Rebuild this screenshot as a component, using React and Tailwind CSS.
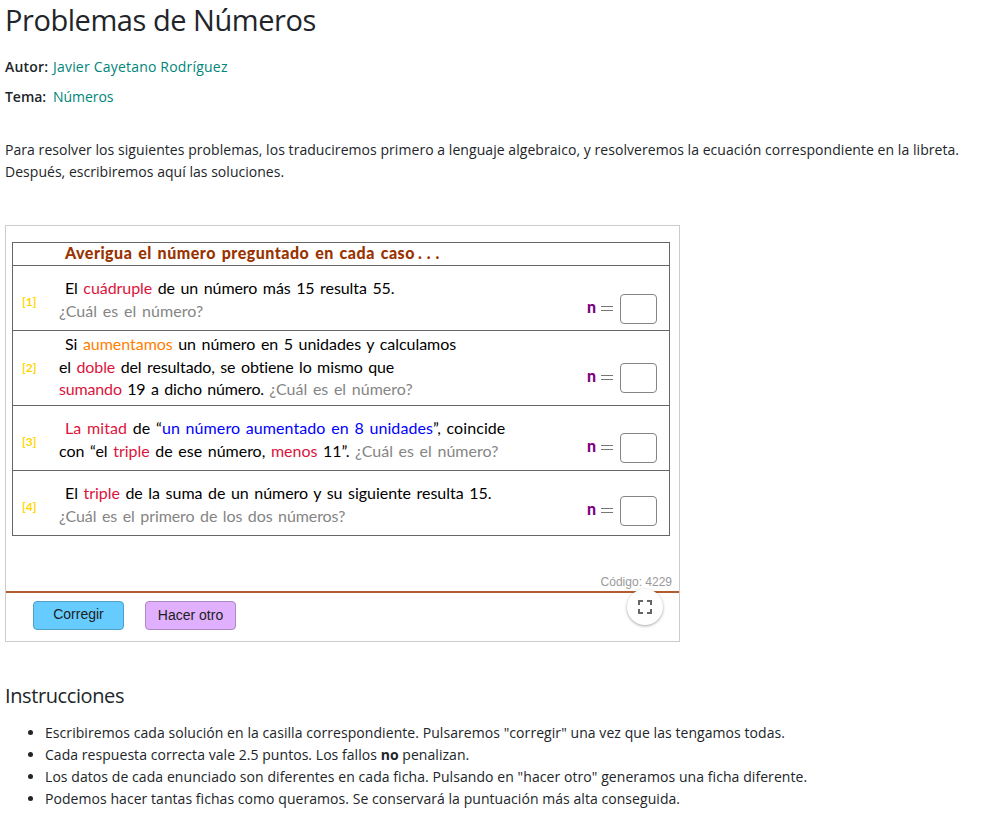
import React from "react";

const red = "text-[#dc143c]";
const gray = "text-[#858585]";

function Line({ indent, track, children }) {
  return (
    <div className={`h-[22.7px] whitespace-nowrap leading-[22.7px] [word-spacing:1.5px] ${indent ? "pl-[6px]" : ""} ${track}`}>
      {children}
    </div>
  );
}

function Row({ label, height, pad, labelPad, answerPad, children }) {
  return (
    <div className={`flex border-b border-[#666] ${height}`}>
      <div className={`w-[46px] shrink-0 pl-[9px] text-[12px] font-bold leading-4 text-[#ffd700] ${labelPad}`}>{label}</div>
      <div className={`w-[528px] shrink-0 ${pad}`}>{children}</div>
      <div className={`flex h-[29px] items-center ${answerPad}`}>
        <span className="w-[14px] pb-[3px] text-[16px] font-black leading-none text-[#800080]">n</span>
        <span className="flex w-[12px] flex-col gap-[3px]">
          <span className="h-px bg-[#777]" />
          <span className="h-px bg-[#777]" />
        </span>
        <input aria-label={`n ${label}`} className="ml-[7px] h-[30px] w-[37px] rounded-[4px] border border-[#858585] bg-white outline-none" />
      </div>
    </div>
  );
}

export default function App() {
  return (
    <main className="h-[815px] w-[993px] overflow-hidden bg-white pl-[5px] font-['Open_Sans',sans-serif] text-[14px] text-[#212529]">
      <h1 className="h-[42px] whitespace-nowrap text-[29px] leading-[40px] tracking-[-0.45px]">Problemas de Números</h1>
      <div className="mt-[14px] h-[22px] whitespace-nowrap leading-[22px] tracking-[0.2px]">
        <span className="inline-block w-[48px] font-semibold">Autor:</span>
        <a className="text-[#00857a]">Javier Cayetano Rodríguez</a>
      </div>
      <div className="mt-[8px] h-[22px] whitespace-nowrap leading-[22px] tracking-[-0.05px]">
        <span className="inline-block w-[48px] font-semibold">Tema:</span>
        <a className="text-[#00857a]">Números</a>
      </div>
      <div className="mt-[31px] whitespace-nowrap leading-[22px]">
        <p className="tracking-[0.055px]">Para resolver los siguientes problemas, los traduciremos primero a lenguaje algebraico, y resolveremos la ecuación correspondiente en la libreta.</p>
        <p className="tracking-[0.03px]">Después, escribiremos aquí las soluciones.</p>
      </div>

      <section className="mt-[42px] flex h-[417px] w-[675px] flex-col border border-[#ccc]">
        <div className="ml-[6px] mt-[16px] h-[294px] w-[658px] border-x border-t border-[#666] font-['Lato',sans-serif] text-[16px] text-black">
          <div className="h-[23px] whitespace-nowrap border-b border-[#666] pl-[52px] text-[16px] font-black leading-[20px] tracking-[0.5px] [word-spacing:1.5px] text-[#993300]">
            Averigua el número preguntado en cada caso<span className="pl-[3px] tracking-[5px]">...</span>
          </div>
          <Row label="[1]" height="h-[65px]" pad="pt-[11px]" labelPad="pt-[28px]" answerPad="mt-[28px]">
            <Line indent track="tracking-[-0.07px]">El <span className={red}>cuádruple</span> de un número más 15 resulta 55.</Line>
            <Line track="tracking-[0.07px]"><span className={gray}>¿Cuál es el número?</span></Line>
          </Row>
          <Row label="[2]" height="h-[75px]" pad="pt-[2px]" labelPad="pt-[29px]" answerPad="mt-[32px]">
            <Line indent track="tracking-[-0.04px]">Si <span className="text-[#ff8000]">aumentamos</span> un número en 5 unidades y calculamos</Line>
            <Line track="tracking-[-0.11px]">el <span className={red}>doble</span> del resultado, se obtiene lo mismo que</Line>
            <Line track="tracking-[-0.16px]"><span className={red}>sumando</span> 19 a dicho número. <span className={`${gray} tracking-[0.02px]`}>¿Cuál es el número?</span></Line>
          </Row>
          <Row label="[3]" height="h-[65px]" pad="pt-[11px]" labelPad="pt-[28px]" answerPad="mt-[27px]">
            <Line indent track="tracking-[0.08px]"><span className={red}>La mitad</span> de “<span className="text-[#0000ff]">un número aumentado en 8 unidades</span>”, coincide</Line>
            <Line track="tracking-[-0.01px]">con “el <span className={red}>triple</span> de ese número, <span className={red}>menos</span> 11”. <span className={`${gray} tracking-[0.02px]`}>¿Cuál es el número?</span></Line>
          </Row>
          <Row label="[4]" height="h-[65px]" pad="pt-[11px]" labelPad="pt-[28px]" answerPad="mt-[25px]">
            <Line indent track="tracking-[-0.03px]">El <span className={red}>triple</span> de la suma de un número y su siguiente resulta 15.</Line>
            <Line track="tracking-[-0.08px]"><span className={gray}>¿Cuál es el primero de los dos números?</span></Line>
          </Row>
        </div>
        <div className="mt-[37px] h-[18px] pr-[7px] text-right font-['Liberation_Sans',sans-serif] text-[12px] leading-[18px] text-[#999]">Código: 4229</div>
        <div className="h-[2px] bg-[#b35c30]" />
        <div className="flex items-start pl-[27px] font-['Liberation_Sans',sans-serif] text-[14px] text-[#202020]">
          <button className="mt-[8px] h-[29px] w-[91px] rounded-[4px] border border-[#519fc5] bg-[#66ccff] pb-[2px]">Corregir</button>
          <button className="ml-[21px] mt-[8px] h-[29px] w-[91px] rounded-[4px] border border-[#ae89c6] bg-[#e0b0ff]">Hacer otro</button>
          <button aria-label="Pantalla completa" className="ml-auto mr-[16px] -mt-[4px] flex h-[36px] w-[36px] items-center justify-center rounded-full bg-white shadow-[0_1px_3px_rgba(0,0,0,0.35)]">
            <svg className="h-[14px] w-[14px]" viewBox="0 0 14 14" fill="none" stroke="#666" strokeWidth="2">
              <path d="M1 5V1H5M9 1H13V5M13 9V13H9M5 13H1V9" />
            </svg>
          </button>
        </div>
      </section>

      <h2 className="mt-[38px] h-[32px] text-[20px] leading-[32px] tracking-[-0.4px]">Instrucciones</h2>
      <ul className="mt-[10px] list-disc whitespace-nowrap pl-[40px] leading-[22px]">
        <li className="tracking-[0.065px]">Escribiremos cada solución en la casilla correspondiente. Pulsaremos "corregir" una vez que las tengamos todas.</li>
        <li className="tracking-[0.05px]">Cada respuesta correcta vale 2.5 puntos. Los fallos <b>no</b> penalizan.</li>
        <li className="tracking-[0.07px]">Los datos de cada enunciado son diferentes en cada ficha. Pulsando en "hacer otro" generamos una ficha diferente.</li>
        <li className="tracking-[0.055px]">Podemos hacer tantas fichas como queramos. Se conservará la puntuación más alta conseguida.</li>
      </ul>
    </main>
  );
}
